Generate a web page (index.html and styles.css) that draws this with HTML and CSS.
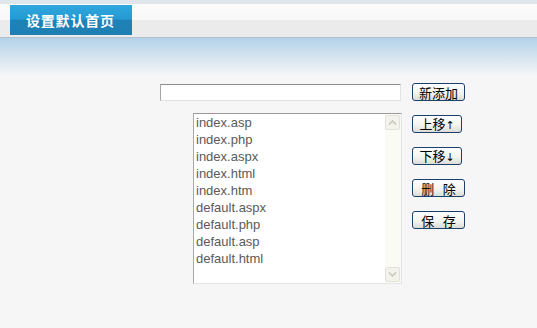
FILE: index.html
```html
<!DOCTYPE html>
<html lang="zh-CN">
  <head>
    <meta charset="UTF-8" />
    <title>设置默认首页</title>
    <link rel="stylesheet" href="styles.css">
  </head>
  <body>
    <div class="top-bar">
      <div class="tab">设置默认首页</div>
    </div>
    <div class="top-fade"></div>

    <div class="content">
      <div class="add-row">
        <input type="text" class="page-input" />
        <button class="btn btn-wide">新添加</button>
      </div>

      <div class="list-row">
        <div class="listbox">
          <ul class="items">
            <li>index.asp</li>
            <li>index.php</li>
            <li>index.aspx</li>
            <li>index.html</li>
            <li>index.htm</li>
            <li>default.aspx</li>
            <li>default.php</li>
            <li>default.asp</li>
            <li>default.html</li>
          </ul>
          <div class="scrollbar">
            <span class="arrow arrow-up">
              <svg width="9" height="5" viewBox="0 0 9 5"><path d="M1 4.5 L4.5 1 L8 4.5" fill="none" stroke="#c8c8c0" stroke-width="1.6"/></svg>
            </span>
            <span class="arrow arrow-down">
              <svg width="9" height="5" viewBox="0 0 9 5"><path d="M1 0.5 L4.5 4 L8 0.5" fill="none" stroke="#c8c8c0" stroke-width="1.6"/></svg>
            </span>
          </div>
        </div>

        <div class="actions">
          <button class="btn">上移<span class="dir">↑</span></button>
          <button class="btn">下移<span class="dir">↓</span></button>
          <button class="btn btn-wide">删&nbsp;&nbsp;&nbsp;除</button>
          <button class="btn btn-wide">保&nbsp;&nbsp;&nbsp;存</button>
        </div>
      </div>
    </div>
  </body>
</html>
```

FILE: styles.css
```css
body {
  margin: 0;
  background-color: #f6f6f6;
  font-family: "Liberation Sans", "Noto Sans CJK SC", sans-serif;
  height: 328px;
  overflow: hidden;
}
.top-bar {
  height: 33px;
  border-top: 4px solid #dfe6ec;
  border-bottom: 1px solid #b4c0ca;
  background: linear-gradient(#fbfbfb 0, #f8f8f8 16px, #ebebeb 16px, #ebebeb 100%);
  padding-left: 10px;
  display: flex;
  align-items: flex-start;
}
.tab {
  margin-top: 1px;
  width: 122px;
  height: 30px;
  box-sizing: border-box;
  padding-left: 16px;
  background: linear-gradient(#2fa6dc 0, #249bd3 14px, #1f83b8 15px, #1e7eb1 100%);
  color: #fff;
  font-family: "Noto Sans CJK SC", sans-serif;
  font-weight: bold;
  font-size: 14px;
  letter-spacing: 0.8px;
  line-height: 30px;
}
.top-fade {
  height: 38px;
  background: linear-gradient(#b3d2e8, #f6f6f6);
}
.content {
  padding: 7px 0 0 160px;
}
.add-row {
  display: flex;
  align-items: center;
  gap: 11px;
}
.page-input {
  width: 241px;
  height: 17px;
  box-sizing: border-box;
  border: 1px solid #e2e2e2;
  border-top-color: #8e8e8e;
  border-left-color: #a6a6a6;
  background: #fff;
  margin: 0;
  padding: 0;
}
.btn {
  width: 50px;
  height: 18px;
  box-sizing: border-box;
  margin: 0;
  padding: 0;
  border: 1px solid #1d3f6c;
  border-radius: 3px;
  background: linear-gradient(#ffffff, #f2f2ee 60%, #dcdcd6);
  font-family: "Noto Sans CJK SC", sans-serif;
  font-size: 13px;
  line-height: 15px;
  color: #000;
  text-align: center;
}
.btn-wide {
  width: 53px;
}
.dir {
  font-family: "DejaVu Sans", sans-serif;
  font-size: 11px;
}
.list-row {
  display: flex;
  align-items: flex-start;
  gap: 10px;
  margin: 12px 0 0 33px;
}
.listbox {
  width: 209px;
  height: 171px;
  box-sizing: border-box;
  border: 1px solid #e4e4e4;
  border-top-color: #9a9a9a;
  border-left-color: #a8a8a8;
  background: #fff;
  display: flex;
}
.items {
  list-style: none;
  margin: 0;
  padding: 0 0 0 2px;
  flex: 1;
  font-size: 13px;
  color: #5a5a5a;
}
.items li {
  height: 17px;
  line-height: 17px;
}
.scrollbar {
  width: 16px;
  background: #fbfbf5;
  display: flex;
  flex-direction: column;
  justify-content: space-between;
  padding: 1px 0;
}
.arrow {
  width: 15px;
  height: 15px;
  box-sizing: border-box;
  border: 1px solid #e2e2da;
  border-radius: 2px;
  background: #f3f3ec;
  display: flex;
  align-items: center;
  justify-content: center;
}
.actions {
  display: flex;
  flex-direction: column;
  gap: 14px;
  padding-top: 2px;
}
```
